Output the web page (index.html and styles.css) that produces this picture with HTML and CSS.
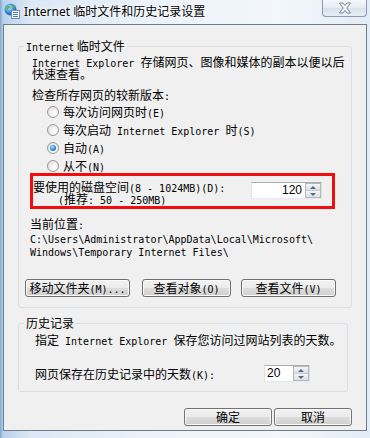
FILE: index.html
```html
<!DOCTYPE html>
<html>
  <head>
    <meta charset="utf-8">
    <title>Internet 临时文件和历史记录设置</title>
    <link rel="stylesheet" href="styles.css">
  </head>
  <body>
    <div class="window">
      <div class="titlebar">
        <svg class="app-icon" width="16" height="16" viewBox="0 0 16 16">
          <defs>
            <radialGradient id="globe" cx="0.4" cy="0.35" r="0.7">
              <stop offset="0" stop-color="#bfe6ff"/>
              <stop offset="0.55" stop-color="#3a8fd6"/>
              <stop offset="1" stop-color="#1c5a9e"/>
            </radialGradient>
          </defs>
          <circle cx="6.5" cy="6.5" r="6" fill="url(#globe)"/>
          <path d="M3 3.5 C4.5 2.5 6 3 6.5 4.5 C5.5 5.5 4 5 3.5 6.5 C2.5 6 2.5 4.5 3 3.5 Z" fill="#5fb33a"/>
          <path d="M8 2 C9.5 2.2 11 3.5 11.5 5 C10.5 5.5 9 4.5 8.5 3.5 Z" fill="#5fb33a"/>
          <rect x="7.5" y="7.5" width="8" height="8" fill="#fff" stroke="#7a8ea6"/>
          <path d="M9 9.5 h5 M9 11.5 h5 M9 13.5 h5" stroke="#3d7fc4" stroke-width="1"/>
        </svg>
        <span class="title">Internet 临时文件和历史记录设置</span>
        <div class="close-btn">
          <svg width="14" height="12" viewBox="0 0 14 12">
            <path d="M1.5 1 H5 L7 3.6 L9 1 H12.5 L8.8 6 L12.5 11 H9 L7 8.4 L5 11 H1.5 L5.2 6 Z" fill="#f4f6f8" stroke="#7b8796" stroke-width="1"/>
          </svg>
        </div>
      </div>

      <div class="client">
        <fieldset class="group group-temp">
          <legend><span class="en">Internet</span> 临时文件</legend>
          <div class="group-body">
            <p class="desc"><span class="en">Internet Explorer </span>存储网页、图像和媒体的副本以便以后<br>快速查看。</p>
            <p class="check-label">检查所存网页的较新版本<span class="en">:</span></p>
            <div class="radio-list">
              <label class="radio-row"><span class="radio"></span><span>每次访问网页时<span class="en">(E)</span></span></label>
              <label class="radio-row"><span class="radio"></span><span>每次启动<span class="en"> Internet Explorer </span>时<span class="en">(S)</span></span></label>
              <label class="radio-row"><span class="radio checked"></span><span>自动<span class="en">(A)</span></span></label>
              <label class="radio-row"><span class="radio"></span><span>从不<span class="en">(N)</span></span></label>
            </div>
            <div class="disk-row">
              <div class="disk-label">
                <div>要使用的磁盘空间<span class="en">(8 - 1024MB)(D):</span></div>
                <div class="hint"><span class="en">(</span>推荐<span class="en">: 50 - 250MB)</span></div>
              </div>
              <div class="spinner spinner-disk">
                <div class="spin-value">120</div>
                <div class="spin-btns"><span class="spin-up"></span><span class="spin-down"></span></div>
              </div>
            </div>
            <p class="loc-label">当前位置<span class="en">:</span></p>
            <p class="path en">C:\Users\Administrator\AppData\Local\Microsoft\<br>Windows\Temporary Internet Files\</p>
            <div class="btn-row">
              <button class="btn btn-move">移动文件夹<span class="en">(M)...</span></button>
              <button class="btn btn-objects">查看对象<span class="en">(O)</span></button>
              <button class="btn btn-files">查看文件<span class="en">(V)</span></button>
            </div>
          </div>
        </fieldset>

        <fieldset class="group group-history">
          <legend>历史记录</legend>
          <div class="group-body">
            <p class="desc">指定<span class="en"> Internet Explorer </span>保存您访问过网站列表的天数。</p>
            <div class="days-row">
              <span class="days-label">网页保存在历史记录中的天数<span class="en">(K):</span></span>
              <div class="spinner spinner-days">
                <div class="spin-value">20</div>
                <div class="spin-btns"><span class="spin-up"></span><span class="spin-down"></span></div>
              </div>
            </div>
          </div>
        </fieldset>

        <div class="dialog-actions">
          <button class="btn btn-ok">确定</button>
          <button class="btn btn-cancel">取消</button>
        </div>
      </div>
    </div>
  </body>
</html>
```

FILE: styles.css
```css
* {
  box-sizing: border-box;
}
body {
  margin: 0;
  width: 370px;
  height: 438px;
  overflow: hidden;
  font-family: "Noto Sans CJK SC", sans-serif;
  font-size: 12px;
  color: #000;
  background: linear-gradient(90deg, #7fa6cf 0, #b9d1e9 3px, #dbe8f5 30px, #edf3fa 45%, #f3f7fb 75%, #e2ecf6 100%);
}
p {
  margin: 0;
}
.en {
  font-family: "DejaVu Sans Mono", monospace;
  font-size: 10px;
  line-height: 8px;
}

.window {
  display: flex;
  flex-direction: column;
  height: 438px;
  padding: 0 3px 7px 3px;
}
.titlebar {
  display: flex;
  align-items: flex-start;
  height: 24px;
  flex-shrink: 0;
}
.app-icon {
  margin: 3px 0 0 1px;
}
.title {
  margin-left: 4px;
  line-height: 24px;
  font-family: "Noto Sans", "Noto Sans CJK SC", sans-serif;
  font-size: 12px;
  text-shadow: 0 0 6px #fff, 0 0 3px #fff;
}
.close-btn {
  margin-left: auto;
  width: 45px;
  height: 17px;
  border: 1px solid #8d9aa9;
  border-top: none;
  border-radius: 0 0 4px 4px;
  background: linear-gradient(#f4f8fc, #e3ebf3 50%, #d8e2ec 51%, #e6eef6);
  display: flex;
  align-items: center;
  justify-content: center;
}

.client {
  flex: 1;
  min-height: 0;
  background: #f0f0f0;
  border: 1px solid #6f7c89;
  display: flex;
  flex-direction: column;
}

.group {
  margin: 15px 14px 0 14px;
  padding: 0;
  border: 1px solid #d5dfe5;
  border-radius: 3px;
  min-width: 0;
  flex-shrink: 0;
}
.group legend {
  margin-left: 5px;
  padding: 0 2px;
  line-height: 12px;
}
.group-body {
  white-space: nowrap;
}
.group-temp .group-body {
  padding: 0 6px 10px 13px;
}
.desc {
  margin-top: 4px;
  line-height: 12px;
}
.check-label {
  margin-top: 9px;
  line-height: 12px;
}
.radio-list {
  margin-top: 2px;
  padding-left: 15px;
}
.radio-row {
  display: flex;
  align-items: center;
  height: 18px;
  line-height: 12px;
}
.radio {
  width: 12px;
  height: 12px;
  margin-right: 4px;
  border-radius: 50%;
  border: 1px solid #9a9a9a;
  background: radial-gradient(circle at 65% 65%, #ffffff 0, #f0f0f0 45%, #d4d4d4 100%);
  display: flex;
  align-items: center;
  justify-content: center;
}
.radio.checked::after {
  content: "";
  width: 6px;
  height: 6px;
  border-radius: 50%;
  background: radial-gradient(circle at 40% 35%, #b4e2ff 0, #2b86d6 55%, #1a4f8a 100%);
}

.disk-row {
  display: flex;
  align-items: flex-start;
  width: 305px;
  margin: -2px 0 0 -2px;
  padding: 5px 10px 1px 0;
  border: 3px solid #f20d0d;
}
.disk-label {
  line-height: 12px;
}
.hint {
  padding-left: 25px;
}
.spinner {
  display: flex;
  height: 17px;
  border: 1px solid #abadb3;
  border-color: #abadb3 #dbdfe6 #e3e9ef #e2e3ea;
  background: #fff;
}
.spinner-disk {
  margin: 1px 0 0 auto;
  width: 71px;
}
.spin-value {
  flex: 1;
  font-family: "Liberation Sans", sans-serif;
  font-size: 12px;
  line-height: 15px;
}
.spinner-disk .spin-value {
  text-align: right;
  padding-right: 3px;
}
.spinner-days .spin-value {
  padding-left: 2px;
}
.spin-btns {
  width: 16px;
  display: flex;
  flex-direction: column;
}
.spin-up,
.spin-down {
  flex: 1;
  border: 1px solid #b3b8bf;
  background: linear-gradient(#f6f6f6, #dedede);
  display: flex;
  align-items: center;
  justify-content: center;
}
.spin-up {
  border-bottom-color: #c9ccd0;
}
.spin-down {
  border-top: none;
}
.spin-up::after {
  content: "";
  border: 3px solid transparent;
  border-top: none;
  border-bottom: 3px solid #4b6a95;
}
.spin-down::after {
  content: "";
  border: 3px solid transparent;
  border-bottom: none;
  border-top: 3px solid #4b6a95;
}

.loc-label {
  margin: 9px 0 0 -2px;
  line-height: 12px;
}
.path {
  margin: 3px 0 0 -2px;
  line-height: 13px;
}
.btn-row {
  display: flex;
  margin: 20px 0 0 -7px;
}
.btn {
  height: 18px;
  padding: 0;
  border: 1px solid #707070;
  border-radius: 3px;
  background: linear-gradient(#f2f2f2 0, #ebebeb 50%, #dddddd 51%, #cfcfcf 100%);
  box-shadow: inset 0 0 0 1px #fbfbfb;
  font-family: inherit;
  font-size: 12px;
  line-height: 12px;
  color: #000;
  white-space: nowrap;
}
.btn-move {
  width: 105px;
}
.btn-objects {
  width: 89px;
  margin-left: 12px;
}
.btn-files {
  width: 95px;
  margin-left: 10px;
}

.group-history {
  margin: 9px 18px 0 14px;
}
.group-history .group-body {
  padding: 0 6px 9px 16px;
}
.group-history .desc {
  margin-top: 5px;
}
.days-row {
  display: flex;
  align-items: center;
  margin-top: 19px;
}
.days-label {
  line-height: 12px;
}
.spinner-days {
  margin-left: 49px;
  width: 46px;
}

.dialog-actions {
  display: flex;
  justify-content: flex-end;
  gap: 2px;
  margin: 16px 14px 0 0;
  flex-shrink: 0;
}
.btn-ok {
  width: 88px;
}
.btn-cancel {
  width: 78px;
}
```
